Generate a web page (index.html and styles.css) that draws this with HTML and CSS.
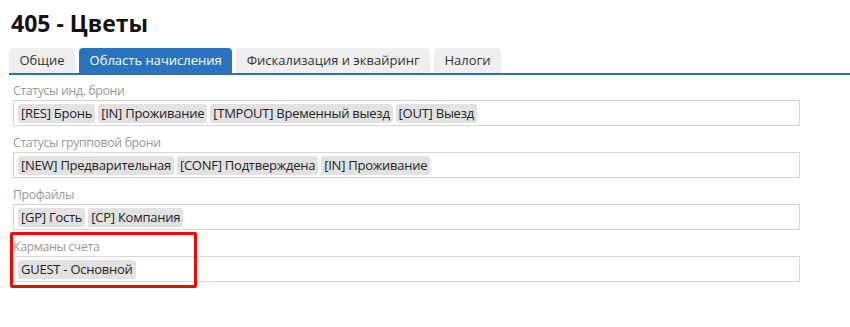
FILE: index.html
```html
<!DOCTYPE html>
<html lang="ru">
<head>
    <meta charset="UTF-8">
    <title>405 - Цветы</title>
    <link rel="stylesheet" href="styles.css">
</head>
<body>
    <h1 class="titulo">405 - Цветы</h1>

    <div class="abas">
        <div class="aba">Общие</div>
        <div class="aba ativa">Область начисления</div>
        <div class="aba">Фискализация и эквайринг</div>
        <div class="aba">Налоги</div>
    </div>

    <div class="campos">
        <div class="campo">
            <div class="rotulo">Статусы инд. брони</div>
            <div class="caixa">
                <span class="chip">[RES] Бронь</span>
                <span class="chip">[IN] Проживание</span>
                <span class="chip">[TMPOUT] Временный выезд</span>
                <span class="chip">[OUT] Выезд</span>
            </div>
        </div>
        <div class="campo">
            <div class="rotulo">Статусы групповой брони</div>
            <div class="caixa">
                <span class="chip">[NEW] Предварительная</span>
                <span class="chip">[CONF] Подтверждена</span>
                <span class="chip">[IN] Проживание</span>
            </div>
        </div>
        <div class="campo">
            <div class="rotulo">Профайлы</div>
            <div class="caixa">
                <span class="chip">[GP] Гость</span>
                <span class="chip">[CP] Компания</span>
            </div>
        </div>
        <div class="campo">
            <div class="destaque"></div>
            <div class="rotulo">Карманы счета</div>
            <div class="caixa">
                <span class="chip">GUEST - Основной</span>
            </div>
        </div>
    </div>
</body>
</html>
```

FILE: styles.css
```css
body {
    font-family: "Open Sans", Arial, sans-serif;
    color: #222;
    background-color: #ffffff;
    margin: 0;
    padding: 0 0 0 9px;
}

.titulo {
    font-size: 23px;
    font-weight: 700;
    color: #111;
    margin: 0;
    padding: 9px 0 0 2px;
    line-height: 28px;
}

.abas {
    display: flex;
    gap: 4px;
    margin-top: 11px;
    border-bottom: 2px solid #2b6fb4;
}

.aba {
    background-color: #efefef;
    color: #333;
    font-size: 13px;
    height: 25px;
    line-height: 25px;
    padding: 0 10.5px;
    border-radius: 4px 4px 0 0;
}

.aba.ativa {
    background-color: #2b74bd;
    color: #fff;
}

.campos {
    padding: 7px 0 0 4px;
    width: 787px;
}

.campo {
    margin-bottom: 8px;
    position: relative;
}

.rotulo {
    color: #999;
    font-size: 12.3px;
    letter-spacing: -0.35px;
    line-height: 18px;
}

.caixa {
    border: 1px solid #d6d6d6;
    height: 24px;
    display: flex;
    align-items: center;
    gap: 3px;
    padding: 0 4px;
}

.chip {
    background-color: #e2e2e2;
    color: #222;
    font-size: 13px;
    letter-spacing: -0.25px;
    line-height: 19px;
    padding: 0 3px;
    border-radius: 3px;
}

.destaque {
    position: absolute;
    left: -3px;
    top: -6px;
    width: 181px;
    height: 50px;
    border: 3px solid #ff0000;
    border-radius: 2px;
}
```
